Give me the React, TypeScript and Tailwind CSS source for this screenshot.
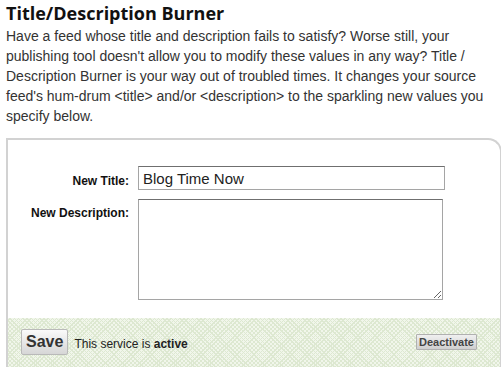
export default function App() {
  return (
    <div className="w-[501px] h-[367px] overflow-hidden bg-white font-['Liberation_Sans',Arial,sans-serif] text-[#222]">
      <div className="px-[6px] pt-[2px]">
        <h1 className="font-['Open_Sans',sans-serif] font-bold text-[18px] leading-[22px] text-[#111]">
          Title/Description Burner
        </h1>
        <p className="mt-[2px] w-[492px] text-[14px] leading-[20px] text-[#333]">
          Have a feed whose title and description fails to satisfy? Worse still, your publishing tool
          doesn't allow you to modify these values in any way? Title / Description Burner is your way
          out of troubled times. It changes your source feed's hum-drum &lt;title&gt; and/or
          &lt;description&gt; to the sparkling new values you specify below.
        </p>
      </div>

      <div className="ml-[6px] mt-[12px] w-[496px] border-l-2 border-t-2 border-r-2 border-[#d2d2d2] rounded-tr-[14px] overflow-hidden">
        <div className="pt-[26px] pb-[18px] grid grid-cols-[121px_1fr] gap-x-[9px] gap-y-[9px]">
          <label className="text-right text-[12px] font-bold text-[#111] pt-[6px]">New Title:</label>
          <input
            type="text"
            defaultValue="Blog Time Now"
            className="w-[307px] h-[24px] border border-[#a5a5a5] border-t-[#6f6f6f] px-[4px] text-[15px] text-[#222] outline-none"
          />
          <label className="text-right text-[12px] font-bold text-[#111] pt-[5px]">New Description:</label>
          <textarea className="w-[305px] h-[101px] border border-[#a5a5a5] border-t-[#6f6f6f] outline-none resize" />
        </div>

        <div className="h-[50px] flex items-start pl-[13px] pr-[23px] pt-[11px] bg-[#f1f6eb] bg-[repeating-linear-gradient(45deg,#dde8d1_0_1px,transparent_1px_3px),repeating-linear-gradient(-45deg,#dde8d1_0_1px,transparent_1px_3px)]">
          <button className="h-[26px] px-[4px] border border-[#b9b9b9] rounded-[2px] bg-gradient-to-b from-[#fafafa] to-[#d6d6d6] text-[16px] font-bold text-[#333] leading-none">
            Save
          </button>
          <span className="ml-[6px] mt-[6px] text-[12px] text-[#222]">
            This service is <b>active</b>
          </span>
          <button className="ml-auto mt-[5px] h-[16px] px-[2px] border border-[#b0b0b0] rounded-[1px] bg-gradient-to-b from-[#f0f0f0] to-[#cfcfcf] text-[11px] font-bold text-[#444] leading-none">
            Deactivate
          </button>
        </div>
      </div>
    </div>
  );
}
